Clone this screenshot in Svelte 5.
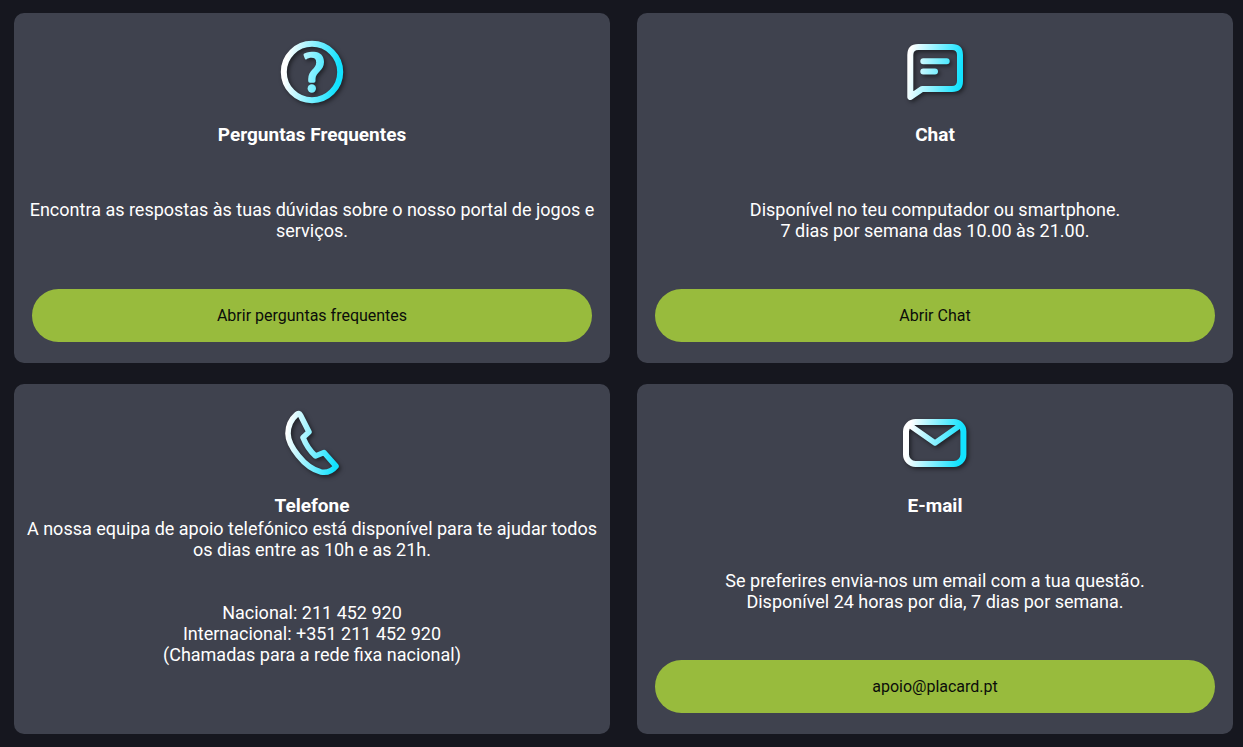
<script>
  const cards = [
    {
      id: 'faq',
      title: 'Perguntas Frequentes',
      lines: ['Encontra as respostas às tuas dúvidas sobre o nosso portal de jogos e serviços.'],
      action: 'Abrir perguntas frequentes'
    },
    {
      id: 'chat',
      title: 'Chat',
      lines: ['Disponível no teu computador ou smartphone.', '7 dias por semana das 10.00 às 21.00.'],
      action: 'Abrir Chat'
    },
    {
      id: 'phone',
      title: 'Telefone',
      intro: 'A nossa equipa de apoio telefónico está disponível para te ajudar todos os dias entre as 10h e as 21h.',
      lines: ['Nacional: 211 452 920', 'Internacional: +351 211 452 920', '(Chamadas para a rede fixa nacional)']
    },
    {
      id: 'email',
      title: 'E-mail',
      lines: ['Se preferires envia-nos um email com a tua questão.', 'Disponível 24 horas por dia, 7 dias por semana.'],
      action: 'apoio@placard.pt',
      href: 'mailto:apoio@placard.pt'
    }
  ];
</script>

<main class="grid">
  {#each cards as card (card.id)}
    <section class="card" aria-labelledby="{card.id}-title">
      <svg class="icon" viewBox="0 0 84 84" aria-hidden="true">
        <defs>
          <linearGradient id="{card.id}-fill" gradientUnits="userSpaceOnUse" x1="12" y1="38" x2="70" y2="46">
            <stop offset="0.06" stop-color="#ffffff" />
            <stop offset="0.96" stop-color="#12e2ff" />
          </linearGradient>
        </defs>
        <g fill="none" stroke="url(#{card.id}-fill)" stroke-width="6" stroke-linecap="round" stroke-linejoin="round">
          {#if card.id === 'faq'}
            <circle cx="42" cy="42" r="28.2" />
            <path
              stroke="none"
              fill="url(#faq-fill)"
              d="M34.3 23.6C38 22 41 21.8 44 21.8C50 21.8 54 26 54 32C54 41 45.5 42 45.5 49V51Q45.5 52.7 43.8 52.7H40Q38.2 52.7 38.2 51V49C38.2 40 46.2 39 46.2 32.5C46.2 29.2 44.6 27.8 41.5 27.8C39.4 27.8 38 28.4 36.6 29.2Q35.2 30 34.8 28.4L33.6 25.2Q33.3 24 34.3 23.6Z"
            />
            <circle cx="41.8" cy="58.5" r="4.2" stroke="none" fill="url(#faq-fill)" />
          {:else if card.id === 'chat'}
            <path d="M17.3 67V25Q17.3 17 25.3 17H59Q67 17 67 25V51Q67 59 59 59H29Z" />
            <path d="M30.3 31.3H53.7M30.3 41.5H42" />
          {:else if card.id === 'phone'}
            <path
              stroke-width="5.6"
              d="M26.5 13.6Q29 11.2 30.5 14.2L39 31L33 36.5C36 44 40 50 45.5 55L54 51.5L66 65.2C62.5 69.5 57 72 51 71C34 67 18 44 18 32.5C18 25.5 21.5 18 26.5 13.6Z"
            />
          {:else}
            <rect x="13" y="21" width="57.4" height="42" rx="9.5" />
            <path stroke-width="5.6" d="M17 24.5L42 42L67 24.5" />
          {/if}
        </g>
      </svg>
      <h2 id="{card.id}-title">{card.title}</h2>
      {#if card.intro}
        <p class="intro">{card.intro}</p>
      {/if}
      <p class="text" class:after={card.intro}>
        {#each card.lines as line}<span>{line}</span>{/each}
      </p>
      {#if card.href}
        <a class="action" href={card.href}>{card.action}</a>
      {:else if card.action}
        <button class="action" type="button">{card.action}</button>
      {/if}
    </section>
  {/each}
</main>

<style>
  :global(body) {
    margin: 0;
    background: #16171f;
  }

  .grid {
    display: grid;
    grid-template-columns: repeat(2, minmax(0, 1fr));
    grid-auto-rows: 1fr;
    gap: 21px 27px;
    padding: 13px 10px 13px 14px;
    color: #ffffff;
    font-family: Roboto, sans-serif;
    font-size: 18px;
    line-height: 21px;
    text-align: center;
  }

  .card {
    display: flex;
    flex-direction: column;
    box-sizing: border-box;
    min-height: 350px;
    padding: 17px 10px 21px;
    border-radius: 10px;
    background: #3f424e;
  }

  .icon {
    align-self: center;
    width: 84px;
    height: 84px;
    filter: drop-shadow(2px 2px 2px rgba(0, 0, 0, 0.5));
  }

  h2 {
    margin: 10px 0 0;
    font-size: 19px;
    line-height: 22px;
    font-weight: 700;
  }

  p {
    margin: 0;
  }

  .intro {
    margin-top: 1px;
  }

  .text {
    margin-top: 53px;
  }

  .text.after {
    margin-top: 42px;
  }

  .text span {
    display: block;
  }

  .action {
    display: block;
    box-sizing: border-box;
    width: calc(100% - 16px);
    margin: auto 8px 0;
    padding: 16px 24px;
    border: 0;
    border-radius: 27px;
    background: #98bb3d;
    color: #0b0d0a;
    font-family: inherit;
    font-size: 16px;
    line-height: 21px;
    text-align: center;
    text-decoration: none;
    cursor: pointer;
  }
</style>
